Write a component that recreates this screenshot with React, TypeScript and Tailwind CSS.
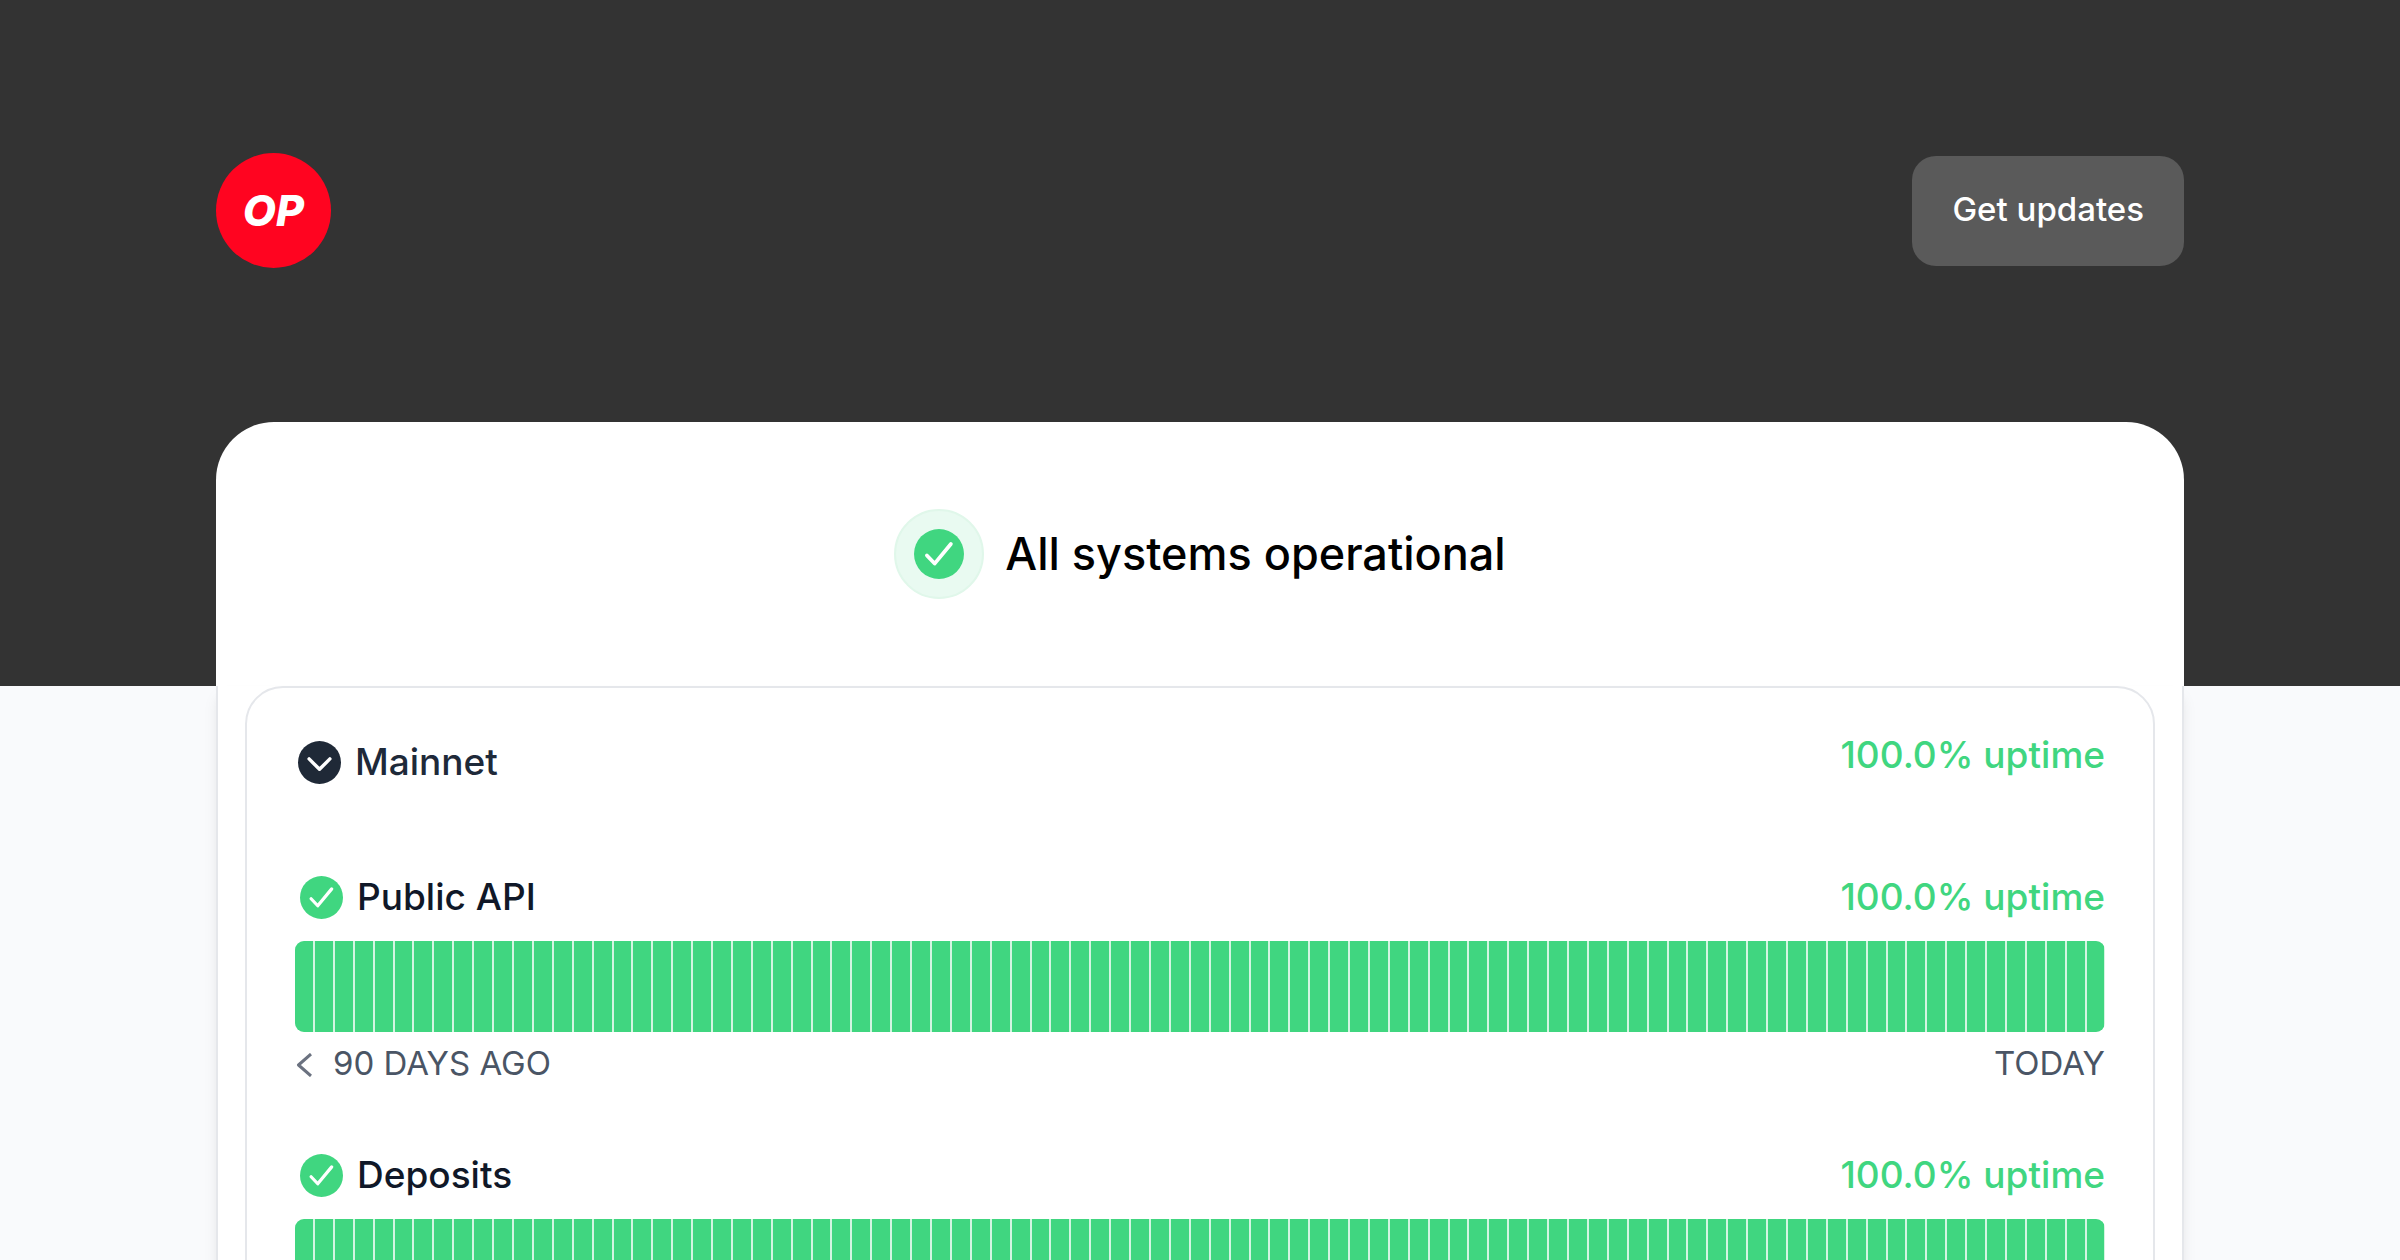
import { useState } from 'react';

interface Component {
  name: string;
  uptime: string;
  showRange: boolean;
}

const components: Component[] = [
  { name: 'Public API', uptime: '100.0%', showRange: true },
  { name: 'Deposits', uptime: '100.0%', showRange: false },
];

const days = Array.from({ length: 91 }, (_, i) => i);

function CheckIcon({ className }: { className: string }) {
  return (
    <svg viewBox="0 0 24 24" fill="none" className={className} aria-hidden="true">
      <circle cx="12" cy="12" r="12" fill="#40d680" />
      <path d="M6.2 12.7 9.9 16.6 17.7 7.2" stroke="#fff" strokeWidth="1.8" strokeLinecap="round" strokeLinejoin="round" />
    </svg>
  );
}

function ChevronIcon({ open }: { open: boolean }) {
  return (
    <svg viewBox="0 0 24 24" fill="none" className={`size-[43px] ${open ? '' : '-rotate-90'}`} aria-hidden="true">
      <circle cx="12" cy="12" r="12" fill="#1f2937" />
      <path d="M6.2 10 12 15.8 17.8 10" stroke="#fff" strokeWidth="1.9" strokeLinecap="round" strokeLinejoin="round" />
    </svg>
  );
}

function ComponentHistory({ name, uptime, showRange }: Component) {
  return (
    <div>
      <div className="flex items-center justify-between text-[37px] leading-[56px] font-medium">
        <h3 className="flex items-center gap-[14px] pl-[5px] text-gray-900">
          <CheckIcon className="size-[43px]" />
          {name}
        </h3>
        <span className="text-[#40d680]">{uptime} uptime</span>
      </div>
      <div className="mt-4 flex h-[91px] gap-0.5 overflow-hidden rounded-[9px] bg-[#d3f5e1]">
        {days.map((day) => (
          <div key={day} className="flex-1 bg-[#40d680]" />
        ))}
      </div>
      {showRange && (
        <div className="mt-[7px] flex items-center justify-between text-[33px] leading-[48px] text-gray-600">
          <button type="button" className="flex items-center gap-5">
            <svg viewBox="0 0 18 24" fill="none" className="mt-1 h-6 w-[18px]" aria-hidden="true">
              <path d="M16 1 3.5 12 16 23" stroke="#6b7280" strokeWidth="3" strokeLinejoin="round" />
            </svg>
            90 DAYS AGO
          </button>
          <span>TODAY</span>
        </div>
      )}
    </div>
  );
}

export default function App() {
  const [open, setOpen] = useState(true);

  return (
    <div className="min-h-screen overflow-hidden bg-[#f9fafc] font-['Inter',sans-serif]">
      {/* Header */}
      <div className="bg-[#333333] px-[9%] pt-[153px]">
        <header className="flex items-center justify-between">
          <a
            href="#"
            className="flex size-[115px] items-center justify-center rounded-full bg-[#ff0420] text-[43px] font-extrabold text-white italic"
          >
            OP
          </a>
          <button type="button" className="rounded-3xl bg-[#5a5a5a] px-10 pt-[29px] pb-[33px] text-[33px] leading-[48px] font-medium text-white">
            Get updates
          </button>
        </header>

        {/* Overall status */}
        <div className="mt-[154px] flex items-center justify-center gap-[21px] rounded-t-[58px] bg-white py-[87px]">
          <div className="flex size-[90px] items-center justify-center rounded-full border-2 border-[#e0f7ea] bg-[#e9faf1]">
            <CheckIcon className="size-[50px]" />
          </div>
          <h1 className="text-[45px] leading-[56px] font-medium text-black">All systems operational</h1>
        </div>
      </div>

      {/* Component groups */}
      <main className="px-[9%]">
        <div className="border-x-2 border-gray-200 bg-white px-[27px] pb-[27px] shadow-lg">
          <section className="rounded-[38px] border-2 border-gray-200 px-12 pt-[39px] pb-12">
            <div className="flex items-start justify-between text-[37px] leading-[56px] font-medium">
              <button
                type="button"
                aria-expanded={open}
                onClick={() => setOpen(!open)}
                className="mt-[7px] flex items-center gap-[14px] pl-[3px] text-gray-800"
              >
                <ChevronIcon open={open} />
                Mainnet
              </button>
              <span className="text-[#40d680]">100.0% uptime</span>
            </div>
            {open && (
              <div className="mt-[79px] space-y-[60px]">
                {components.map((component) => (
                  <ComponentHistory key={component.name} {...component} />
                ))}
              </div>
            )}
          </section>
        </div>
      </main>
    </div>
  );
}
